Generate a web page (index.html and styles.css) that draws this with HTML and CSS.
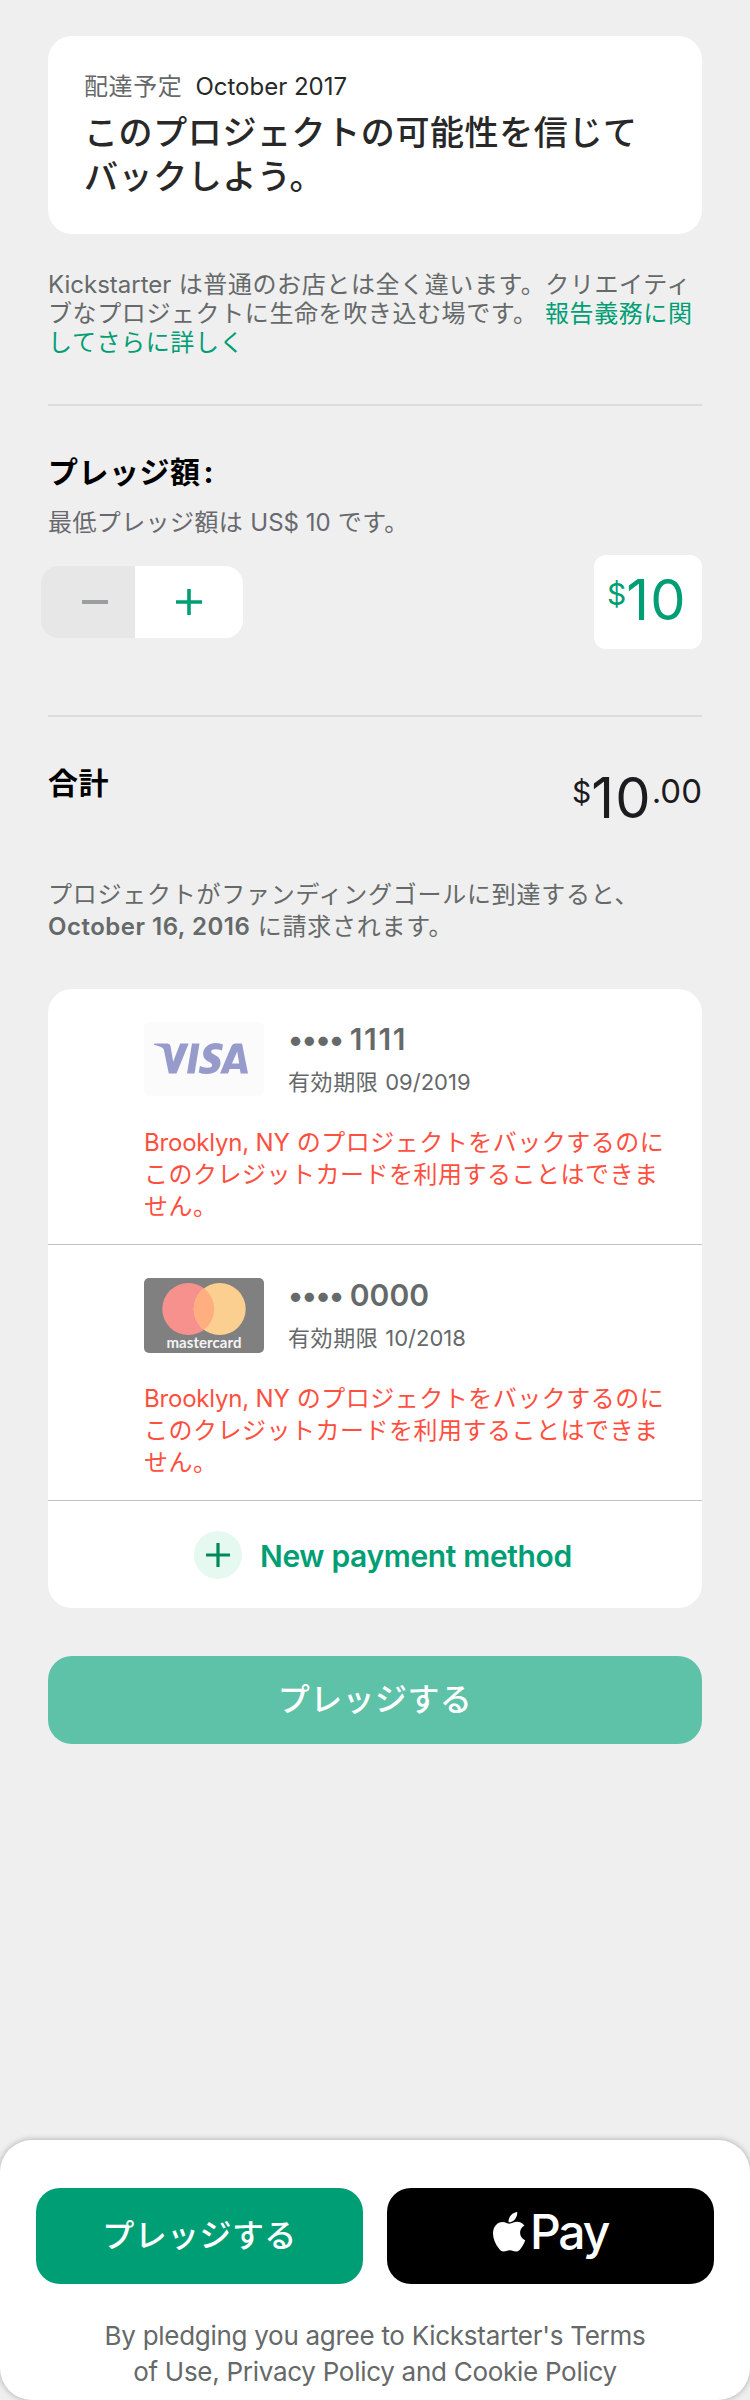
FILE: index.html
```html
<!DOCTYPE html>
<html lang="ja">
<head>
<meta charset="utf-8">
<title>プレッジ</title>
<link rel="stylesheet" href="styles.css">
</head>
<body>
<main class="page">
  <section class="reward">
    <p class="reward-date"><span class="label">配達予定</span><span class="lat">October 2017</span></p>
    <h1 class="reward-title">このプロジェクトの可能性を信じて<br>バックしよう。</h1>
  </section>
  <p class="notice"><span class="lat">Kickstarter</span> は普通のお店とは全く違います。クリエイティ<br>ブなプロジェクトに生命を吹き込む場です。 <a class="link">報告義務に関<br>してさらに詳しく</a></p>
  <section class="pledge">
    <h2 class="heading">プレッジ額<span class="colon">:</span></h2>
    <p class="hint">最低プレッジ額は <span class="lat">US$ 10</span> です。</p>
    <div class="pledge-row">
      <div class="stepper">
        <span class="step step-minus"><svg width="26" height="26" viewBox="0 0 26 26"><path d="M0 13h26" stroke="#9b9e9e" stroke-width="4"/></svg></span>
        <span class="step step-plus"><svg width="26" height="26" viewBox="0 0 26 26"><path d="M0 13h26M13 0v26" stroke="#009e74" stroke-width="3.6"/></svg></span>
      </div>
      <div class="amount"><span class="currency">$</span><span class="whole">10</span></div>
    </div>
  </section>
  <section class="total">
    <h2 class="heading">合計</h2>
    <div class="sum"><span class="currency">$</span><span class="whole">10</span><span class="cents">.00</span></div>
  </section>
  <p class="charge">プロジェクトがファンディングゴールに到達すると、<br><b>October 16, 2016</b> に請求されます。</p>
  <section class="cards">
    <article class="card">
      <div class="card-head">
        <svg class="card-art" width="120" height="74" viewBox="0 0 120 74"><rect width="120" height="74" rx="5" fill="#fbfbfc"/><path fill="#979bcb" d="M10 22.2c0-.4.6-.7 1-.7h12.500q2.500 0 3 2.700l2.700 15.500 7-18.200h8.500L32.500 51.500h-7.700l-4.900-23.500q-.4-1.800-2-2.500-3.400-1.500-7.900-2.700zM48 21.500h7.500l-5 30H43zM79 22.500l-1.100 6.100q-3.200-1.300-6.200-1.300-4.400 0-4.600 2.100c0 3.500 9.400 3.200 9.400 11.100 0 7-5.800 11.500-13.600 11.500q-4.800 0-8.200-1.500l1.200-6.500q3.500 1.800 7.400 1.700 4.700 0 4.900-2.500c0-3.500-9.100-3.300-9.100-11.100 0-6.500 5.600-11.200 13-11.200q4 0 6.900 1.600zM98 21.500l6 30h-7.300l-.9-4.600H85.700l-1.700 4.600h-8l11.300-27q1.300-3 4.300-3zM93.200 29.500L88 41.500h7.200z"/></svg>
        <div class="card-info">
          <p class="card-number"><span class="dots">••••</span><span class="digits digits-wide">1111</span></p>
          <p class="card-expiry">有効期限 <span class="lat">09/2019</span></p>
        </div>
      </div>
      <p class="card-error"><span class="place">Brooklyn, NY</span> のプロジェクトをバックするのに<br>このクレジットカードを利用することはできま<br>せん。</p>
    </article>
    <article class="card">
      <div class="card-head">
        <svg class="card-art" width="120" height="75" viewBox="0 0 120 75"><rect width="120" height="75" rx="5" fill="#808080"/><circle cx="44.300" cy="31" r="26" fill="#f6918d"/><circle cx="75.700" cy="31" r="26" fill="#fbcf8f"/><path d="M60 10.280a26 26 0 0 1 0 41.440a26 26 0 0 1 0-41.440z" fill="#ffae80"/><text class="mc-name" x="60" y="70" text-anchor="middle" textLength="75">mastercard</text></svg>
        <div class="card-info">
          <p class="card-number"><span class="dots">••••</span><span class="digits">0000</span></p>
          <p class="card-expiry">有効期限 <span class="lat">10/2018</span></p>
        </div>
      </div>
      <p class="card-error"><span class="place">Brooklyn, NY</span> のプロジェクトをバックするのに<br>このクレジットカードを利用することはできま<br>せん。</p>
    </article>
    <div class="new-method">
      <svg width="48" height="48" viewBox="0 0 48 48"><circle cx="24" cy="24" r="24" fill="#e5f9f1"/><path d="M12 24h24M24 12v24" stroke="#00875a" stroke-width="3.200"/></svg>
      <span class="new-label">New payment method</span>
    </div>
  </section>
  <div class="button button-muted">プレッジする</div>
</main>
<footer class="sheet">
  <div class="actions">
    <div class="button">プレッジする</div>
    <div class="button button-pay">
      <svg class="apple" width="33" height="40" viewBox="0 0 33 40"><path fill="#fff" d="M24.200 0c.3 3-.9 5.600-2.500 7.400-1.600 1.900-3.900 3-6.100 2.800-.3-2.800 1-5.400 2.500-7.100C19.800 1.300 22.200.1 24.200 0zM31.400 13.600c-3 1.900-4.300 4.100-4.300 7.100 0 3.600 2 6.200 5.100 7.500-1 3-2.500 5.700-4.400 8.300-1.600 2.200-2.900 3.100-4.800 3.100-2.300 0-3.300-1.300-6.200-1.300-2.800 0-4 1.300-6.200 1.300-2.100 0-3.500-1.300-5.100-3.600C2.300 31.900 0 26.700 0 21.600 0 14.400 4.500 9.900 9.600 9.900c2.900 0 5.200 1.800 7 1.800 1.700 0 4.300-1.900 7.600-1.900 2.900 0 5.500 1.400 7.200 3.800z"/></svg>
      <span class="pay-word">Pay</span>
    </div>
  </div>
  <p class="terms">By pledging you agree to Kickstarter's Terms<br>of Use, Privacy Policy and Cookie Policy</p>
</footer>
</body>
</html>
```
FILE: styles.css
```css
* { box-sizing: border-box; margin: 0; padding: 0; }
body {
  width: 750px;
  height: 2400px;
  display: flex;
  flex-direction: column;
  justify-content: space-between;
  background: #efefef;
  color: #656969;
  font-family: Inter, "Noto Sans CJK JP", sans-serif;
  font-size: 24px;
  letter-spacing: .6px;
  overflow: hidden;
}
svg { display: block; flex: none; }
.lat { letter-spacing: 0; }
.page { padding: 36px 48px 0; }
.reward { height: 198px; padding: 35px 36px 0; background: #fff; border-radius: 24px; }
.reward-date { line-height: 32px; display: flex; gap: 13px; color: #282828; }
.label { color: #656969; }
.reward-title { margin-top: 8px; font-size: 34px; font-weight: 500; line-height: 44px; color: #282828; white-space: nowrap; }
.notice { margin-top: 36px; line-height: 29px; white-space: nowrap; }
.link { color: #009e74; }
.pledge { height: 311px; margin-top: 47px; padding-top: 48px; border-top: 2px solid #dcdcdc; }
.heading { font-size: 30px; font-weight: 700; line-height: 36px; color: #000; letter-spacing: .5px; }
.colon { margin-left: 3px; }
.hint { margin-top: 15px; line-height: 36px; letter-spacing: .4px; color: #68696e; }
.pledge-row { display: flex; justify-content: space-between; align-items: center; margin-top: 14px; margin-left: -7px; }
.stepper { display: flex; height: 72px; border-radius: 18px; overflow: hidden; }
.step { display: flex; align-items: center; padding-left: 41px; }
.step-minus { width: 94px; background: #e7e7e7; }
.step-plus { width: 108px; background: #fff; }
.amount { display: flex; width: 108px; height: 94px; padding: 15px 0 0 13px; background: #fff; border-radius: 12px; color: #009e74; }
.currency { font-size: 30px; line-height: 48px; letter-spacing: 0; }
.whole { font-size: 56px; line-height: 60px; letter-spacing: 1.2px; }
.cents { font-size: 33px; line-height: 46px; letter-spacing: 0; font-weight: 400; }
.total { display: flex; justify-content: space-between; height: 144px; padding-top: 46px; border-top: 2px solid #dcdcdc; }
.total .heading { margin-top: 2px; }
.sum { display: flex; padding-top: 5px; color: #1c1c1e; }
.charge { margin-top: 20px; line-height: 32px; letter-spacing: .75px; white-space: nowrap; }
.charge b { font-weight: 600; letter-spacing: .5px; }
.cards { height: 619px; margin-top: 46px; background: #fff; border-radius: 24px; }
.card { height: 256px; padding: 33px 0 0 96px; border-bottom: 1px solid #c2c4c4; }
.card-head { display: flex; gap: 24px; height: 75px; }
.card-number { display: flex; gap: 7px; font-size: 30px; font-weight: 600; line-height: 34px; letter-spacing: 0; }
.dots { letter-spacing: -1.4px; }
.digits-wide { letter-spacing: 1.6px; }
.card-expiry { margin-top: 8px; font-size: 22px; line-height: 36px; letter-spacing: .6px; }
.card-error { margin-top: 30px; line-height: 32px; letter-spacing: .5px; color: #ff4f3f; white-space: nowrap; }
.place { letter-spacing: -.2px; }
.mc-name { font: 700 15px "Lato", sans-serif; fill: #f4f4f4; letter-spacing: 0; }
.new-method { display: flex; align-items: center; gap: 18px; height: 108px; padding-left: 146px; font-size: 30px; font-weight: 600; letter-spacing: -.35px; color: #009e74; }
.new-label { padding-top: 2px; }
.button { display: flex; align-items: center; justify-content: center; height: 96px; padding-bottom: 6px; border-radius: 24px; background: #009e74; color: #fff; font-size: 32px; font-weight: 500; letter-spacing: .4px; }
.button-muted { height: 88px; margin-top: 48px; background: #5ec2a9; }
.sheet { height: 260px; padding: 48px 36px 0; background: #fff; border-radius: 32px; box-shadow: 0 0 6px rgba(0, 0, 0, .3); }
.actions { display: grid; grid-template-columns: 1fr 1fr; gap: 24px; }
.button-pay { padding-bottom: 8px; background: #000; gap: 4px; }
.pay-word { font-size: 48px; font-weight: 500; line-height: 60px; letter-spacing: -2.2px; }
.terms { margin-top: 34px; font-size: 26px; line-height: 36px; letter-spacing: -.28px; text-align: center; white-space: nowrap; }
```
